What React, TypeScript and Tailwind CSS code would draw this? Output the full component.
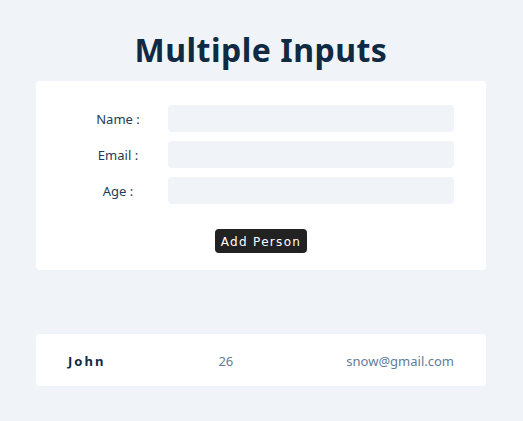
const people = [{ name: 'John', age: 26, email: 'snow@gmail.com' }];

const fields = ['Name', 'Email', 'Age'];

export default function App() {
  return (
    <div className="min-h-[421px] bg-[#f0f4f8] pt-[27px] pl-9 pr-[37px] font-['Noto_Sans',sans-serif]">
      <h1 className="text-center text-[32px] font-bold leading-[46px] tracking-[0.5px] text-[#102a43]">
        Multiple Inputs
      </h1>
      <div className="mt-[8px] rounded-[4px] bg-white px-8 pt-6 pb-[17px]">
        <div className="flex flex-col gap-[9px]">
          {fields.map((f) => (
            <div key={f} className="flex items-center">
              <label className="w-[100px] pt-[3px] text-center text-[13px] text-[#243b53]">{f} :</label>
              <input className="h-[27px] flex-1 rounded-[4px] bg-[#f0f4f8] px-2 outline-none" />
            </div>
          ))}
        </div>
        <div className="mt-[25px] flex justify-center">
          <button className="h-6 rounded-[4px] bg-[#222] px-[6px] pt-[1px] font-['DejaVu_Sans',sans-serif] text-[12px] tracking-[1.3px] text-white">
            Add Person
          </button>
        </div>
      </div>
      {people.map((p) => (
        <div
          key={p.email}
          className="mt-[64px] flex h-[52px] items-center justify-between rounded-[4px] bg-white px-8 pt-[3px] text-[13px]"
        >
          <span className="font-bold tracking-[2px] text-[#102a43]">{p.name}</span>
          <span className="text-[#627d98]">{p.age}</span>
          <span className="text-[#627d98]">{p.email}</span>
        </div>
      ))}
    </div>
  );
}
